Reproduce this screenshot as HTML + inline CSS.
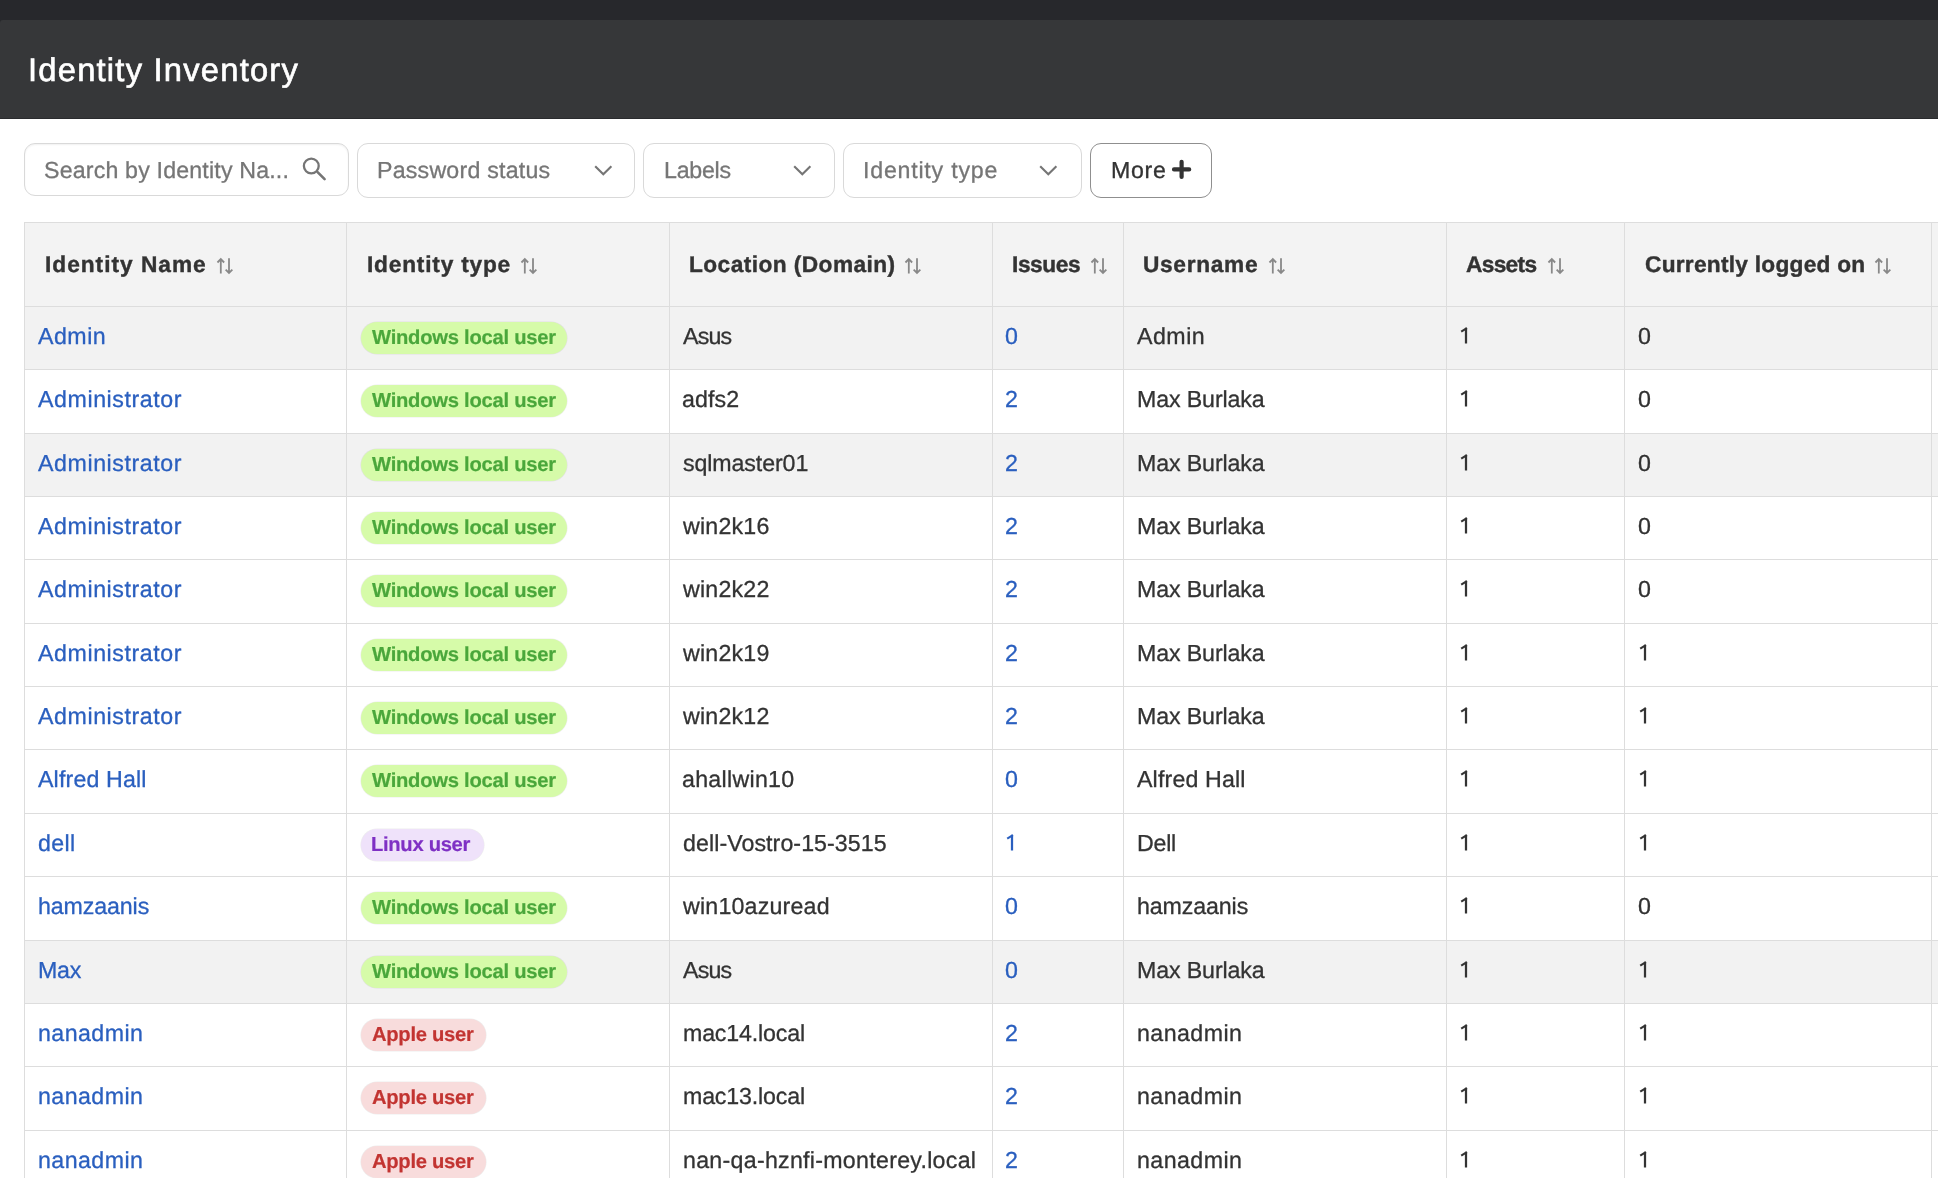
<!DOCTYPE html><html><head><meta charset="utf-8"><title>Identity Inventory</title><style>
*{box-sizing:border-box;margin:0;padding:0}
html,body{width:1938px;height:1178px;overflow:hidden;background:#fff;font-family:"Liberation Sans",sans-serif;color:#333}
.a{position:absolute}
.t{position:absolute;white-space:nowrap;will-change:transform;text-rendering:geometricPrecision}
.box{position:absolute;border:1.3px solid #d9d9d9;border-radius:11px;background:#fff}
.hl{position:absolute;height:1px;background:#dddddd}
.vl{position:absolute;width:1px;background:#dddddd}
.badge{position:absolute;height:32px;border-radius:16px;box-shadow:0 0 0 0.6px rgba(0,0,0,0.07)}
</style></head><body>
<div class="a" style="left:0;top:0;width:1938px;height:30px;background:#27282c"></div>
<div class="a" style="left:0;top:20px;width:1938px;height:99px;background:#363739;border-top-left-radius:3px;box-shadow:inset 0 -1px 0 #2a2b2e"></div>
<div class="t" style="left:27.70px;top:54.22px;font-size:32.7px;line-height:32.7px;font-weight:400;letter-spacing:1.229px;color:#fff;-webkit-text-stroke:0.65px #fff">Identity Inventory</div>
<div class="box" style="left:24px;top:143px;width:324.5px;height:52.5px;box-shadow:inset 0 1px 2px rgba(0,0,0,0.06)"></div>
<div class="box" style="left:357px;top:143px;width:277.5px;height:54.5px"></div>
<div class="box" style="left:643px;top:143px;width:191.5px;height:54.5px"></div>
<div class="box" style="left:843px;top:143px;width:239px;height:54.5px"></div>
<div class="box" style="left:1090px;top:143px;width:122px;height:54.5px;border-color:#8f8f8f"></div>
<div class="t" style="left:44.10px;top:159.16px;font-size:23.2px;line-height:23.2px;font-weight:400;letter-spacing:0.170px;color:#767676;-webkit-text-stroke:0.3px #767676">Search by Identity Na...</div>
<div class="t" style="left:377.00px;top:159.16px;font-size:23.2px;line-height:23.2px;font-weight:400;letter-spacing:0.214px;color:#767676;-webkit-text-stroke:0.3px #767676">Password status</div>
<div class="t" style="left:664.20px;top:159.16px;font-size:23.2px;line-height:23.2px;font-weight:400;letter-spacing:-0.260px;color:#767676;-webkit-text-stroke:0.3px #767676">Labels</div>
<div class="t" style="left:863.10px;top:159.16px;font-size:23.2px;line-height:23.2px;font-weight:400;letter-spacing:0.775px;color:#767676;-webkit-text-stroke:0.3px #767676">Identity type</div>
<div class="t" style="left:1110.80px;top:159.16px;font-size:23.2px;line-height:23.2px;font-weight:400;letter-spacing:0.700px;color:#333;-webkit-text-stroke:0.3px #333">More</div>
<svg class="a" style="left:301px;top:156px" width="28" height="28" viewBox="0 0 28 28"><circle cx="10.3" cy="10.0" r="7.4" fill="none" stroke="#757575" stroke-width="2.3"/><path d="M16.6 16.2L23.6 23.2" stroke="#757575" stroke-width="2.6" stroke-linecap="round"/></svg>
<svg class="a" style="left:593.5px;top:165px" width="19" height="11" viewBox="0 0 19 11"><path d="M1.2 1.2L9.3 9.3L17.4 1.2" fill="none" stroke="#757575" stroke-width="2.1"/></svg>
<svg class="a" style="left:793.1px;top:165px" width="19" height="11" viewBox="0 0 19 11"><path d="M1.2 1.2L9.3 9.3L17.4 1.2" fill="none" stroke="#757575" stroke-width="2.1"/></svg>
<svg class="a" style="left:1039.1px;top:165px" width="19" height="11" viewBox="0 0 19 11"><path d="M1.2 1.2L9.3 9.3L17.4 1.2" fill="none" stroke="#757575" stroke-width="2.1"/></svg>
<svg class="a" style="left:1170px;top:158px" width="23" height="23" viewBox="0 0 23 23"><path d="M11.6 3.8V19M4 11.4H19.2" stroke="#333" stroke-width="4.2" stroke-linecap="round"/></svg>
<div class="a" style="left:24px;top:222px;width:1914px;height:84px;background:#f3f3f3"></div>
<div class="a" style="left:24px;top:306px;width:1914px;height:63px;background:#f2f2f2"></div>
<div class="a" style="left:24px;top:433px;width:1914px;height:63px;background:#f2f2f2"></div>
<div class="a" style="left:24px;top:940px;width:1914px;height:63px;background:#f2f2f2"></div>
<div class="hl" style="left:24px;top:222px;width:1914px"></div>
<div class="hl" style="left:24px;top:306px;width:1914px"></div>
<div class="hl" style="left:24px;top:369px;width:1914px"></div>
<div class="hl" style="left:24px;top:433px;width:1914px"></div>
<div class="hl" style="left:24px;top:496px;width:1914px"></div>
<div class="hl" style="left:24px;top:559px;width:1914px"></div>
<div class="hl" style="left:24px;top:623px;width:1914px"></div>
<div class="hl" style="left:24px;top:686px;width:1914px"></div>
<div class="hl" style="left:24px;top:749px;width:1914px"></div>
<div class="hl" style="left:24px;top:813px;width:1914px"></div>
<div class="hl" style="left:24px;top:876px;width:1914px"></div>
<div class="hl" style="left:24px;top:940px;width:1914px"></div>
<div class="hl" style="left:24px;top:1003px;width:1914px"></div>
<div class="hl" style="left:24px;top:1066px;width:1914px"></div>
<div class="hl" style="left:24px;top:1130px;width:1914px"></div>
<div class="hl" style="left:24px;top:1193px;width:1914px"></div>
<div class="vl" style="left:24px;top:222px;height:956px"></div>
<div class="vl" style="left:346px;top:222px;height:956px"></div>
<div class="vl" style="left:669px;top:222px;height:956px"></div>
<div class="vl" style="left:992px;top:222px;height:956px"></div>
<div class="vl" style="left:1123px;top:222px;height:956px"></div>
<div class="vl" style="left:1446px;top:222px;height:956px"></div>
<div class="vl" style="left:1624px;top:222px;height:956px"></div>
<div class="vl" style="left:1931px;top:222px;height:956px"></div>
<div class="t" style="left:44.90px;top:252.58px;font-size:22.7px;line-height:22.7px;font-weight:700;letter-spacing:0.992px;color:#333;-webkit-text-stroke:0.4px #333">Identity Name</div>
<svg class="a" style="left:215.5px;top:257px" width="18" height="18" viewBox="0 0 18 18"><path d="M4.8 16.6V2.2M1.45 5.5L4.8 2.1L8.15 5.5M13 1.2V16M9.65 12.6L13 16L16.35 12.6" fill="none" stroke="#888" stroke-width="1.8"/></svg>
<div class="t" style="left:366.90px;top:252.58px;font-size:22.7px;line-height:22.7px;font-weight:700;letter-spacing:0.800px;color:#333;-webkit-text-stroke:0.4px #333">Identity type</div>
<svg class="a" style="left:520.1px;top:257px" width="18" height="18" viewBox="0 0 18 18"><path d="M4.8 16.6V2.2M1.45 5.5L4.8 2.1L8.15 5.5M13 1.2V16M9.65 12.6L13 16L16.35 12.6" fill="none" stroke="#888" stroke-width="1.8"/></svg>
<div class="t" style="left:689.00px;top:252.58px;font-size:22.7px;line-height:22.7px;font-weight:700;letter-spacing:0.438px;color:#333;-webkit-text-stroke:0.4px #333">Location (Domain)</div>
<svg class="a" style="left:904.2px;top:257px" width="18" height="18" viewBox="0 0 18 18"><path d="M4.8 16.6V2.2M1.45 5.5L4.8 2.1L8.15 5.5M13 1.2V16M9.65 12.6L13 16L16.35 12.6" fill="none" stroke="#888" stroke-width="1.8"/></svg>
<div class="t" style="left:1012.00px;top:252.58px;font-size:22.7px;line-height:22.7px;font-weight:700;letter-spacing:-0.400px;color:#333;-webkit-text-stroke:0.4px #333">Issues</div>
<svg class="a" style="left:1090.1px;top:257px" width="18" height="18" viewBox="0 0 18 18"><path d="M4.8 16.6V2.2M1.45 5.5L4.8 2.1L8.15 5.5M13 1.2V16M9.65 12.6L13 16L16.35 12.6" fill="none" stroke="#888" stroke-width="1.8"/></svg>
<div class="t" style="left:1143.30px;top:252.58px;font-size:22.7px;line-height:22.7px;font-weight:700;letter-spacing:0.686px;color:#333;-webkit-text-stroke:0.4px #333">Username</div>
<svg class="a" style="left:1267.6px;top:257px" width="18" height="18" viewBox="0 0 18 18"><path d="M4.8 16.6V2.2M1.45 5.5L4.8 2.1L8.15 5.5M13 1.2V16M9.65 12.6L13 16L16.35 12.6" fill="none" stroke="#888" stroke-width="1.8"/></svg>
<div class="t" style="left:1466.40px;top:252.58px;font-size:22.7px;line-height:22.7px;font-weight:700;letter-spacing:-0.680px;color:#333;-webkit-text-stroke:0.4px #333">Assets</div>
<svg class="a" style="left:1547.1px;top:257px" width="18" height="18" viewBox="0 0 18 18"><path d="M4.8 16.6V2.2M1.45 5.5L4.8 2.1L8.15 5.5M13 1.2V16M9.65 12.6L13 16L16.35 12.6" fill="none" stroke="#888" stroke-width="1.8"/></svg>
<div class="t" style="left:1644.60px;top:252.58px;font-size:22.7px;line-height:22.7px;font-weight:700;letter-spacing:0.261px;color:#333;-webkit-text-stroke:0.4px #333">Currently logged on</div>
<svg class="a" style="left:1874.3px;top:257px" width="18" height="18" viewBox="0 0 18 18"><path d="M4.8 16.6V2.2M1.45 5.5L4.8 2.1L8.15 5.5M13 1.2V16M9.65 12.6L13 16L16.35 12.6" fill="none" stroke="#888" stroke-width="1.8"/></svg>
<div class="t" style="left:37.55px;top:324.76px;font-size:23.2px;line-height:23.2px;font-weight:400;letter-spacing:0.500px;color:#2a5fbf;-webkit-text-stroke:0.3px #2a5fbf">Admin</div>
<div class="badge" style="left:360.6px;top:321.9px;width:206.3px;background:#d6fba9"></div>
<div class="t" style="left:371.90px;top:328.30px;font-size:20.2px;line-height:20.2px;font-weight:700;letter-spacing:-0.241px;color:#4aa73b;-webkit-text-stroke:0.2px #4aa73b">Windows local user</div>
<div class="t" style="left:682.55px;top:324.76px;font-size:23.2px;line-height:23.2px;font-weight:400;letter-spacing:-0.833px;color:#333;-webkit-text-stroke:0.3px #333">Asus</div>
<div class="t" style="left:1005.40px;top:324.76px;font-size:23.2px;line-height:23.2px;font-weight:400;letter-spacing:0.000px;color:#2a5fbf;-webkit-text-stroke:0.3px #2a5fbf">0</div>
<div class="t" style="left:1136.55px;top:324.76px;font-size:23.2px;line-height:23.2px;font-weight:400;letter-spacing:0.500px;color:#333;-webkit-text-stroke:0.3px #333">Admin</div>
<svg class="a" style="left:1460.00px;top:327.10px" width="10" height="18" viewBox="0 0 10 18"><path d="M6 0.75V16.5" stroke="#333" stroke-width="2.25" fill="none"/><path d="M6.9 1.2L1.2 4.7" stroke="#333" stroke-width="2.1" fill="none"/></svg>
<div class="t" style="left:1638.20px;top:324.76px;font-size:23.2px;line-height:23.2px;font-weight:400;letter-spacing:0.000px;color:#333;-webkit-text-stroke:0.3px #333">0</div>
<div class="t" style="left:37.55px;top:387.76px;font-size:23.2px;line-height:23.2px;font-weight:400;letter-spacing:0.575px;color:#2a5fbf;-webkit-text-stroke:0.3px #2a5fbf">Administrator</div>
<div class="badge" style="left:360.6px;top:384.9px;width:206.3px;background:#d6fba9"></div>
<div class="t" style="left:371.90px;top:391.30px;font-size:20.2px;line-height:20.2px;font-weight:700;letter-spacing:-0.241px;color:#4aa73b;-webkit-text-stroke:0.2px #4aa73b">Windows local user</div>
<div class="t" style="left:682.40px;top:387.76px;font-size:23.2px;line-height:23.2px;font-weight:400;letter-spacing:0.100px;color:#333;-webkit-text-stroke:0.3px #333">adfs2</div>
<div class="t" style="left:1005.40px;top:387.76px;font-size:23.2px;line-height:23.2px;font-weight:400;letter-spacing:0.000px;color:#2a5fbf;-webkit-text-stroke:0.3px #2a5fbf">2</div>
<div class="t" style="left:1137.30px;top:387.76px;font-size:23.2px;line-height:23.2px;font-weight:400;letter-spacing:-0.120px;color:#333;-webkit-text-stroke:0.3px #333">Max Burlaka</div>
<svg class="a" style="left:1460.00px;top:390.10px" width="10" height="18" viewBox="0 0 10 18"><path d="M6 0.75V16.5" stroke="#333" stroke-width="2.25" fill="none"/><path d="M6.9 1.2L1.2 4.7" stroke="#333" stroke-width="2.1" fill="none"/></svg>
<div class="t" style="left:1638.20px;top:387.76px;font-size:23.2px;line-height:23.2px;font-weight:400;letter-spacing:0.000px;color:#333;-webkit-text-stroke:0.3px #333">0</div>
<div class="t" style="left:37.55px;top:451.76px;font-size:23.2px;line-height:23.2px;font-weight:400;letter-spacing:0.575px;color:#2a5fbf;-webkit-text-stroke:0.3px #2a5fbf">Administrator</div>
<div class="badge" style="left:360.6px;top:448.9px;width:206.3px;background:#d6fba9"></div>
<div class="t" style="left:371.90px;top:455.30px;font-size:20.2px;line-height:20.2px;font-weight:700;letter-spacing:-0.241px;color:#4aa73b;-webkit-text-stroke:0.2px #4aa73b">Windows local user</div>
<div class="t" style="left:683.10px;top:451.76px;font-size:23.2px;line-height:23.2px;font-weight:400;letter-spacing:-0.100px;color:#333;-webkit-text-stroke:0.3px #333">sqlmaster01</div>
<div class="t" style="left:1005.40px;top:451.76px;font-size:23.2px;line-height:23.2px;font-weight:400;letter-spacing:0.000px;color:#2a5fbf;-webkit-text-stroke:0.3px #2a5fbf">2</div>
<div class="t" style="left:1137.30px;top:451.76px;font-size:23.2px;line-height:23.2px;font-weight:400;letter-spacing:-0.120px;color:#333;-webkit-text-stroke:0.3px #333">Max Burlaka</div>
<svg class="a" style="left:1460.00px;top:454.10px" width="10" height="18" viewBox="0 0 10 18"><path d="M6 0.75V16.5" stroke="#333" stroke-width="2.25" fill="none"/><path d="M6.9 1.2L1.2 4.7" stroke="#333" stroke-width="2.1" fill="none"/></svg>
<div class="t" style="left:1638.20px;top:451.76px;font-size:23.2px;line-height:23.2px;font-weight:400;letter-spacing:0.000px;color:#333;-webkit-text-stroke:0.3px #333">0</div>
<div class="t" style="left:37.55px;top:514.76px;font-size:23.2px;line-height:23.2px;font-weight:400;letter-spacing:0.575px;color:#2a5fbf;-webkit-text-stroke:0.3px #2a5fbf">Administrator</div>
<div class="badge" style="left:360.6px;top:511.9px;width:206.3px;background:#d6fba9"></div>
<div class="t" style="left:371.90px;top:518.30px;font-size:20.2px;line-height:20.2px;font-weight:700;letter-spacing:-0.241px;color:#4aa73b;-webkit-text-stroke:0.2px #4aa73b">Windows local user</div>
<div class="t" style="left:683.40px;top:514.76px;font-size:23.2px;line-height:23.2px;font-weight:400;letter-spacing:0.217px;color:#333;-webkit-text-stroke:0.3px #333">win2k16</div>
<div class="t" style="left:1005.40px;top:514.76px;font-size:23.2px;line-height:23.2px;font-weight:400;letter-spacing:0.000px;color:#2a5fbf;-webkit-text-stroke:0.3px #2a5fbf">2</div>
<div class="t" style="left:1137.30px;top:514.76px;font-size:23.2px;line-height:23.2px;font-weight:400;letter-spacing:-0.120px;color:#333;-webkit-text-stroke:0.3px #333">Max Burlaka</div>
<svg class="a" style="left:1460.00px;top:517.10px" width="10" height="18" viewBox="0 0 10 18"><path d="M6 0.75V16.5" stroke="#333" stroke-width="2.25" fill="none"/><path d="M6.9 1.2L1.2 4.7" stroke="#333" stroke-width="2.1" fill="none"/></svg>
<div class="t" style="left:1638.20px;top:514.76px;font-size:23.2px;line-height:23.2px;font-weight:400;letter-spacing:0.000px;color:#333;-webkit-text-stroke:0.3px #333">0</div>
<div class="t" style="left:37.55px;top:577.76px;font-size:23.2px;line-height:23.2px;font-weight:400;letter-spacing:0.575px;color:#2a5fbf;-webkit-text-stroke:0.3px #2a5fbf">Administrator</div>
<div class="badge" style="left:360.6px;top:574.9px;width:206.3px;background:#d6fba9"></div>
<div class="t" style="left:371.90px;top:581.30px;font-size:20.2px;line-height:20.2px;font-weight:700;letter-spacing:-0.241px;color:#4aa73b;-webkit-text-stroke:0.2px #4aa73b">Windows local user</div>
<div class="t" style="left:683.40px;top:577.76px;font-size:23.2px;line-height:23.2px;font-weight:400;letter-spacing:0.217px;color:#333;-webkit-text-stroke:0.3px #333">win2k22</div>
<div class="t" style="left:1005.40px;top:577.76px;font-size:23.2px;line-height:23.2px;font-weight:400;letter-spacing:0.000px;color:#2a5fbf;-webkit-text-stroke:0.3px #2a5fbf">2</div>
<div class="t" style="left:1137.30px;top:577.76px;font-size:23.2px;line-height:23.2px;font-weight:400;letter-spacing:-0.120px;color:#333;-webkit-text-stroke:0.3px #333">Max Burlaka</div>
<svg class="a" style="left:1460.00px;top:580.10px" width="10" height="18" viewBox="0 0 10 18"><path d="M6 0.75V16.5" stroke="#333" stroke-width="2.25" fill="none"/><path d="M6.9 1.2L1.2 4.7" stroke="#333" stroke-width="2.1" fill="none"/></svg>
<div class="t" style="left:1638.20px;top:577.76px;font-size:23.2px;line-height:23.2px;font-weight:400;letter-spacing:0.000px;color:#333;-webkit-text-stroke:0.3px #333">0</div>
<div class="t" style="left:37.55px;top:641.76px;font-size:23.2px;line-height:23.2px;font-weight:400;letter-spacing:0.575px;color:#2a5fbf;-webkit-text-stroke:0.3px #2a5fbf">Administrator</div>
<div class="badge" style="left:360.6px;top:638.9px;width:206.3px;background:#d6fba9"></div>
<div class="t" style="left:371.90px;top:645.30px;font-size:20.2px;line-height:20.2px;font-weight:700;letter-spacing:-0.241px;color:#4aa73b;-webkit-text-stroke:0.2px #4aa73b">Windows local user</div>
<div class="t" style="left:683.40px;top:641.76px;font-size:23.2px;line-height:23.2px;font-weight:400;letter-spacing:0.217px;color:#333;-webkit-text-stroke:0.3px #333">win2k19</div>
<div class="t" style="left:1005.40px;top:641.76px;font-size:23.2px;line-height:23.2px;font-weight:400;letter-spacing:0.000px;color:#2a5fbf;-webkit-text-stroke:0.3px #2a5fbf">2</div>
<div class="t" style="left:1137.30px;top:641.76px;font-size:23.2px;line-height:23.2px;font-weight:400;letter-spacing:-0.120px;color:#333;-webkit-text-stroke:0.3px #333">Max Burlaka</div>
<svg class="a" style="left:1460.00px;top:644.10px" width="10" height="18" viewBox="0 0 10 18"><path d="M6 0.75V16.5" stroke="#333" stroke-width="2.25" fill="none"/><path d="M6.9 1.2L1.2 4.7" stroke="#333" stroke-width="2.1" fill="none"/></svg>
<svg class="a" style="left:1639.10px;top:644.10px" width="10" height="18" viewBox="0 0 10 18"><path d="M6 0.75V16.5" stroke="#333" stroke-width="2.25" fill="none"/><path d="M6.9 1.2L1.2 4.7" stroke="#333" stroke-width="2.1" fill="none"/></svg>
<div class="t" style="left:37.55px;top:704.76px;font-size:23.2px;line-height:23.2px;font-weight:400;letter-spacing:0.575px;color:#2a5fbf;-webkit-text-stroke:0.3px #2a5fbf">Administrator</div>
<div class="badge" style="left:360.6px;top:701.9px;width:206.3px;background:#d6fba9"></div>
<div class="t" style="left:371.90px;top:708.30px;font-size:20.2px;line-height:20.2px;font-weight:700;letter-spacing:-0.241px;color:#4aa73b;-webkit-text-stroke:0.2px #4aa73b">Windows local user</div>
<div class="t" style="left:683.40px;top:704.76px;font-size:23.2px;line-height:23.2px;font-weight:400;letter-spacing:0.217px;color:#333;-webkit-text-stroke:0.3px #333">win2k12</div>
<div class="t" style="left:1005.40px;top:704.76px;font-size:23.2px;line-height:23.2px;font-weight:400;letter-spacing:0.000px;color:#2a5fbf;-webkit-text-stroke:0.3px #2a5fbf">2</div>
<div class="t" style="left:1137.30px;top:704.76px;font-size:23.2px;line-height:23.2px;font-weight:400;letter-spacing:-0.120px;color:#333;-webkit-text-stroke:0.3px #333">Max Burlaka</div>
<svg class="a" style="left:1460.00px;top:707.10px" width="10" height="18" viewBox="0 0 10 18"><path d="M6 0.75V16.5" stroke="#333" stroke-width="2.25" fill="none"/><path d="M6.9 1.2L1.2 4.7" stroke="#333" stroke-width="2.1" fill="none"/></svg>
<svg class="a" style="left:1639.10px;top:707.10px" width="10" height="18" viewBox="0 0 10 18"><path d="M6 0.75V16.5" stroke="#333" stroke-width="2.25" fill="none"/><path d="M6.9 1.2L1.2 4.7" stroke="#333" stroke-width="2.1" fill="none"/></svg>
<div class="t" style="left:37.55px;top:767.76px;font-size:23.2px;line-height:23.2px;font-weight:400;letter-spacing:0.150px;color:#2a5fbf;-webkit-text-stroke:0.3px #2a5fbf">Alfred Hall</div>
<div class="badge" style="left:360.6px;top:764.9px;width:206.3px;background:#d6fba9"></div>
<div class="t" style="left:371.90px;top:771.30px;font-size:20.2px;line-height:20.2px;font-weight:700;letter-spacing:-0.241px;color:#4aa73b;-webkit-text-stroke:0.2px #4aa73b">Windows local user</div>
<div class="t" style="left:682.40px;top:767.76px;font-size:23.2px;line-height:23.2px;font-weight:400;letter-spacing:0.289px;color:#333;-webkit-text-stroke:0.3px #333">ahallwin10</div>
<div class="t" style="left:1005.40px;top:767.76px;font-size:23.2px;line-height:23.2px;font-weight:400;letter-spacing:0.000px;color:#2a5fbf;-webkit-text-stroke:0.3px #2a5fbf">0</div>
<div class="t" style="left:1136.55px;top:767.76px;font-size:23.2px;line-height:23.2px;font-weight:400;letter-spacing:0.150px;color:#333;-webkit-text-stroke:0.3px #333">Alfred Hall</div>
<svg class="a" style="left:1460.00px;top:770.10px" width="10" height="18" viewBox="0 0 10 18"><path d="M6 0.75V16.5" stroke="#333" stroke-width="2.25" fill="none"/><path d="M6.9 1.2L1.2 4.7" stroke="#333" stroke-width="2.1" fill="none"/></svg>
<svg class="a" style="left:1639.10px;top:770.10px" width="10" height="18" viewBox="0 0 10 18"><path d="M6 0.75V16.5" stroke="#333" stroke-width="2.25" fill="none"/><path d="M6.9 1.2L1.2 4.7" stroke="#333" stroke-width="2.1" fill="none"/></svg>
<div class="t" style="left:37.60px;top:831.76px;font-size:23.2px;line-height:23.2px;font-weight:400;letter-spacing:0.367px;color:#2a5fbf;-webkit-text-stroke:0.3px #2a5fbf">dell</div>
<div class="badge" style="left:360.6px;top:828.9px;width:123.2px;background:#efe2fa"></div>
<div class="t" style="left:370.90px;top:835.30px;font-size:20.2px;line-height:20.2px;font-weight:700;letter-spacing:-0.300px;color:#7f30c4;-webkit-text-stroke:0.2px #7f30c4">Linux user</div>
<div class="t" style="left:682.60px;top:831.76px;font-size:23.2px;line-height:23.2px;font-weight:400;letter-spacing:0.072px;color:#333;-webkit-text-stroke:0.3px #333">dell-Vostro-15-3515</div>
<svg class="a" style="left:1006.30px;top:834.10px" width="10" height="18" viewBox="0 0 10 18"><path d="M6 0.75V16.5" stroke="#2a5fbf" stroke-width="2.25" fill="none"/><path d="M6.9 1.2L1.2 4.7" stroke="#2a5fbf" stroke-width="2.1" fill="none"/></svg>
<div class="t" style="left:1137.10px;top:831.76px;font-size:23.2px;line-height:23.2px;font-weight:400;letter-spacing:-0.233px;color:#333;-webkit-text-stroke:0.3px #333">Dell</div>
<svg class="a" style="left:1460.00px;top:834.10px" width="10" height="18" viewBox="0 0 10 18"><path d="M6 0.75V16.5" stroke="#333" stroke-width="2.25" fill="none"/><path d="M6.9 1.2L1.2 4.7" stroke="#333" stroke-width="2.1" fill="none"/></svg>
<svg class="a" style="left:1639.10px;top:834.10px" width="10" height="18" viewBox="0 0 10 18"><path d="M6 0.75V16.5" stroke="#333" stroke-width="2.25" fill="none"/><path d="M6.9 1.2L1.2 4.7" stroke="#333" stroke-width="2.1" fill="none"/></svg>
<div class="t" style="left:38.10px;top:894.76px;font-size:23.2px;line-height:23.2px;font-weight:400;letter-spacing:-0.113px;color:#2a5fbf;-webkit-text-stroke:0.3px #2a5fbf">hamzaanis</div>
<div class="badge" style="left:360.6px;top:891.9px;width:206.3px;background:#d6fba9"></div>
<div class="t" style="left:371.90px;top:898.30px;font-size:20.2px;line-height:20.2px;font-weight:700;letter-spacing:-0.241px;color:#4aa73b;-webkit-text-stroke:0.2px #4aa73b">Windows local user</div>
<div class="t" style="left:683.40px;top:894.76px;font-size:23.2px;line-height:23.2px;font-weight:400;letter-spacing:0.200px;color:#333;-webkit-text-stroke:0.3px #333">win10azuread</div>
<div class="t" style="left:1005.40px;top:894.76px;font-size:23.2px;line-height:23.2px;font-weight:400;letter-spacing:0.000px;color:#2a5fbf;-webkit-text-stroke:0.3px #2a5fbf">0</div>
<div class="t" style="left:1137.10px;top:894.76px;font-size:23.2px;line-height:23.2px;font-weight:400;letter-spacing:-0.113px;color:#333;-webkit-text-stroke:0.3px #333">hamzaanis</div>
<svg class="a" style="left:1460.00px;top:897.10px" width="10" height="18" viewBox="0 0 10 18"><path d="M6 0.75V16.5" stroke="#333" stroke-width="2.25" fill="none"/><path d="M6.9 1.2L1.2 4.7" stroke="#333" stroke-width="2.1" fill="none"/></svg>
<div class="t" style="left:1638.20px;top:894.76px;font-size:23.2px;line-height:23.2px;font-weight:400;letter-spacing:0.000px;color:#333;-webkit-text-stroke:0.3px #333">0</div>
<div class="t" style="left:38.30px;top:958.76px;font-size:23.2px;line-height:23.2px;font-weight:400;letter-spacing:-0.250px;color:#2a5fbf;-webkit-text-stroke:0.3px #2a5fbf">Max</div>
<div class="badge" style="left:360.6px;top:955.9px;width:206.3px;background:#d6fba9"></div>
<div class="t" style="left:371.90px;top:962.30px;font-size:20.2px;line-height:20.2px;font-weight:700;letter-spacing:-0.241px;color:#4aa73b;-webkit-text-stroke:0.2px #4aa73b">Windows local user</div>
<div class="t" style="left:682.55px;top:958.76px;font-size:23.2px;line-height:23.2px;font-weight:400;letter-spacing:-0.833px;color:#333;-webkit-text-stroke:0.3px #333">Asus</div>
<div class="t" style="left:1005.40px;top:958.76px;font-size:23.2px;line-height:23.2px;font-weight:400;letter-spacing:0.000px;color:#2a5fbf;-webkit-text-stroke:0.3px #2a5fbf">0</div>
<div class="t" style="left:1137.30px;top:958.76px;font-size:23.2px;line-height:23.2px;font-weight:400;letter-spacing:-0.120px;color:#333;-webkit-text-stroke:0.3px #333">Max Burlaka</div>
<svg class="a" style="left:1460.00px;top:961.10px" width="10" height="18" viewBox="0 0 10 18"><path d="M6 0.75V16.5" stroke="#333" stroke-width="2.25" fill="none"/><path d="M6.9 1.2L1.2 4.7" stroke="#333" stroke-width="2.1" fill="none"/></svg>
<svg class="a" style="left:1639.10px;top:961.10px" width="10" height="18" viewBox="0 0 10 18"><path d="M6 0.75V16.5" stroke="#333" stroke-width="2.25" fill="none"/><path d="M6.9 1.2L1.2 4.7" stroke="#333" stroke-width="2.1" fill="none"/></svg>
<div class="t" style="left:38.20px;top:1021.76px;font-size:23.2px;line-height:23.2px;font-weight:400;letter-spacing:0.443px;color:#2a5fbf;-webkit-text-stroke:0.3px #2a5fbf">nanadmin</div>
<div class="badge" style="left:360.6px;top:1018.9px;width:125.0px;background:#f8dcdc"></div>
<div class="t" style="left:371.90px;top:1025.30px;font-size:20.2px;line-height:20.2px;font-weight:700;letter-spacing:-0.278px;color:#c23431;-webkit-text-stroke:0.2px #c23431">Apple user</div>
<div class="t" style="left:682.90px;top:1021.76px;font-size:23.2px;line-height:23.2px;font-weight:400;letter-spacing:-0.170px;color:#333;-webkit-text-stroke:0.3px #333">mac14.local</div>
<div class="t" style="left:1005.40px;top:1021.76px;font-size:23.2px;line-height:23.2px;font-weight:400;letter-spacing:0.000px;color:#2a5fbf;-webkit-text-stroke:0.3px #2a5fbf">2</div>
<div class="t" style="left:1137.20px;top:1021.76px;font-size:23.2px;line-height:23.2px;font-weight:400;letter-spacing:0.443px;color:#333;-webkit-text-stroke:0.3px #333">nanadmin</div>
<svg class="a" style="left:1460.00px;top:1024.10px" width="10" height="18" viewBox="0 0 10 18"><path d="M6 0.75V16.5" stroke="#333" stroke-width="2.25" fill="none"/><path d="M6.9 1.2L1.2 4.7" stroke="#333" stroke-width="2.1" fill="none"/></svg>
<svg class="a" style="left:1639.10px;top:1024.10px" width="10" height="18" viewBox="0 0 10 18"><path d="M6 0.75V16.5" stroke="#333" stroke-width="2.25" fill="none"/><path d="M6.9 1.2L1.2 4.7" stroke="#333" stroke-width="2.1" fill="none"/></svg>
<div class="t" style="left:38.20px;top:1084.76px;font-size:23.2px;line-height:23.2px;font-weight:400;letter-spacing:0.443px;color:#2a5fbf;-webkit-text-stroke:0.3px #2a5fbf">nanadmin</div>
<div class="badge" style="left:360.6px;top:1081.9px;width:125.0px;background:#f8dcdc"></div>
<div class="t" style="left:371.90px;top:1088.30px;font-size:20.2px;line-height:20.2px;font-weight:700;letter-spacing:-0.278px;color:#c23431;-webkit-text-stroke:0.2px #c23431">Apple user</div>
<div class="t" style="left:682.90px;top:1084.76px;font-size:23.2px;line-height:23.2px;font-weight:400;letter-spacing:-0.170px;color:#333;-webkit-text-stroke:0.3px #333">mac13.local</div>
<div class="t" style="left:1005.40px;top:1084.76px;font-size:23.2px;line-height:23.2px;font-weight:400;letter-spacing:0.000px;color:#2a5fbf;-webkit-text-stroke:0.3px #2a5fbf">2</div>
<div class="t" style="left:1137.20px;top:1084.76px;font-size:23.2px;line-height:23.2px;font-weight:400;letter-spacing:0.443px;color:#333;-webkit-text-stroke:0.3px #333">nanadmin</div>
<svg class="a" style="left:1460.00px;top:1087.10px" width="10" height="18" viewBox="0 0 10 18"><path d="M6 0.75V16.5" stroke="#333" stroke-width="2.25" fill="none"/><path d="M6.9 1.2L1.2 4.7" stroke="#333" stroke-width="2.1" fill="none"/></svg>
<svg class="a" style="left:1639.10px;top:1087.10px" width="10" height="18" viewBox="0 0 10 18"><path d="M6 0.75V16.5" stroke="#333" stroke-width="2.25" fill="none"/><path d="M6.9 1.2L1.2 4.7" stroke="#333" stroke-width="2.1" fill="none"/></svg>
<div class="t" style="left:38.20px;top:1148.76px;font-size:23.2px;line-height:23.2px;font-weight:400;letter-spacing:0.443px;color:#2a5fbf;-webkit-text-stroke:0.3px #2a5fbf">nanadmin</div>
<div class="badge" style="left:360.6px;top:1145.9px;width:125.0px;background:#f8dcdc"></div>
<div class="t" style="left:371.90px;top:1152.30px;font-size:20.2px;line-height:20.2px;font-weight:700;letter-spacing:-0.278px;color:#c23431;-webkit-text-stroke:0.2px #c23431">Apple user</div>
<div class="t" style="left:683.20px;top:1148.76px;font-size:23.2px;line-height:23.2px;font-weight:400;letter-spacing:0.281px;color:#333;-webkit-text-stroke:0.3px #333">nan-qa-hznfi-monterey.local</div>
<div class="t" style="left:1005.40px;top:1148.76px;font-size:23.2px;line-height:23.2px;font-weight:400;letter-spacing:0.000px;color:#2a5fbf;-webkit-text-stroke:0.3px #2a5fbf">2</div>
<div class="t" style="left:1137.20px;top:1148.76px;font-size:23.2px;line-height:23.2px;font-weight:400;letter-spacing:0.443px;color:#333;-webkit-text-stroke:0.3px #333">nanadmin</div>
<svg class="a" style="left:1460.00px;top:1151.10px" width="10" height="18" viewBox="0 0 10 18"><path d="M6 0.75V16.5" stroke="#333" stroke-width="2.25" fill="none"/><path d="M6.9 1.2L1.2 4.7" stroke="#333" stroke-width="2.1" fill="none"/></svg>
<svg class="a" style="left:1639.10px;top:1151.10px" width="10" height="18" viewBox="0 0 10 18"><path d="M6 0.75V16.5" stroke="#333" stroke-width="2.25" fill="none"/><path d="M6.9 1.2L1.2 4.7" stroke="#333" stroke-width="2.1" fill="none"/></svg>
</body></html>
